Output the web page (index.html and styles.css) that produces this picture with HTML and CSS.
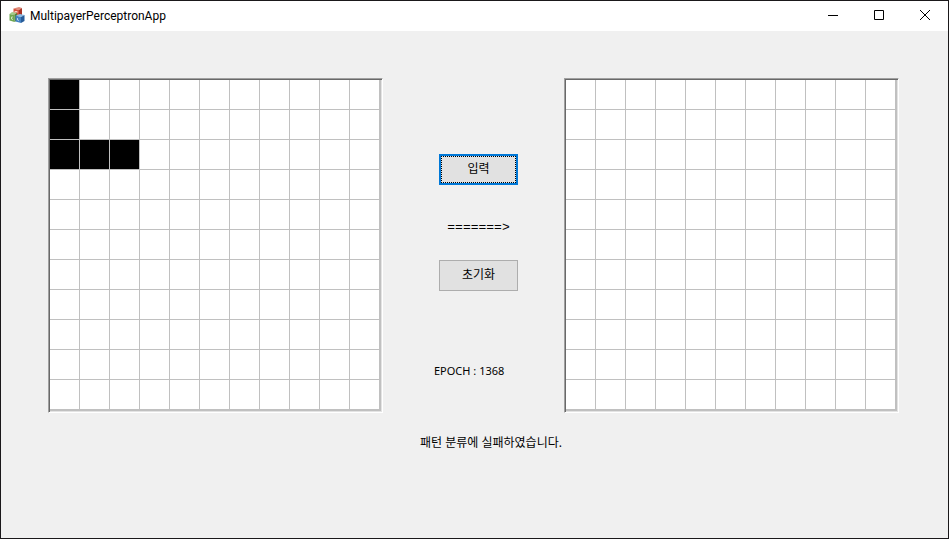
FILE: index.html
```html
<!DOCTYPE html>
<html lang="ko">
<head>
<meta charset="utf-8">
<title>MultipayerPerceptronApp</title>
<link rel="stylesheet" href="styles.css">
</head>
<body>
<div class="window">
  <header class="titlebar">
    <svg class="app-icon" viewBox="0 0 16 16" aria-hidden="true">
      <path fill="#e08a78" d="M4.500 1.500 10 0 13 1 10 3z"/>
      <path fill="#d4523c" d="M4.500 1.500 10 3v6L4.500 8z"/>
      <path fill="#a83224" d="M10 3l3-2v7L10 9z"/>
      <path fill="#a3cc8a" d="M0.500 7 3 5 8 6 5.500 8z"/>
      <path fill="#6fa850" d="M0.500 7 5.500 8v7L0.500 13.500z"/>
      <path fill="#47832f" d="M5.500 8 8 6v7.500l-2.500 1.500z"/>
      <path fill="#8dbbe3" d="M6.500 8.500 11 7l4.500 1L12 10z"/>
      <path fill="#4482c2" d="M6.500 8.500 12 10v6l-5.500-1.500z"/>
      <path fill="#275c9a" d="M12 10l3.500-2V14L12 16z"/>
      <path fill="none" stroke="#fff" stroke-opacity=".6" d="M6 6V4l1 1 1-1v2M4 10H2.500v2l1.500.5M8.500 11v2l1.500.5"/>
    </svg>
    <h1 class="title">MultipayerPerceptronApp</h1>
    <button class="caption" aria-label="Minimize"><svg viewBox="0 0 10 10"><path d="M0 5.500h10"/></svg></button>
    <button class="caption" aria-label="Maximize"><svg viewBox="0 0 10 10"><path d="M.5.5h9v9h-9z"/></svg></button>
    <button class="caption" aria-label="Close"><svg viewBox="0 0 10 10"><path d="M0 0l10 10M10 0L0 10"/></svg></button>
  </header>
  <main class="client">
    <div class="board" data-filled="0 11 22 23 24"></div>
    <section class="panel">
      <div class="controls">
        <button class="push default">입력</button>
        <span class="arrow">=======&gt;</span>
        <button class="push">초기화</button>
      </div>
      <p class="epoch">EPOCH : 1368</p>
      <p class="message">패턴 분류에 실패하였습니다.</p>
    </section>
    <div class="board" data-filled=""></div>
  </main>
</div>
<script src="board.js"></script>
</body>
</html>
```
FILE: styles.css
```css
* {
  box-sizing: border-box;
}

body {
  margin: 0;
  font: 12px/16px "Noto Sans", "Noto Sans CJK KR", sans-serif;
  color: #000;
}

.window {
  display: flex;
  flex-direction: column;
  min-height: 100vh;
  border: 1px solid #1a181a;
  background: #f0f0f0;
}

.titlebar {
  display: flex;
  align-items: center;
  height: 30px;
  background: #fff;
}

.app-icon {
  width: 16px;
  height: 16px;
  margin: 0 5px 2px 8px;
}

.title {
  flex: 1;
  margin: 0;
  font-family: Roboto, sans-serif;
  font-size: 12px;
  font-weight: 400;
}

.caption {
  display: flex;
  align-items: center;
  justify-content: center;
  width: 46px;
  height: 30px;
  padding: 0 0 2px;
  border: 0;
  background: none;
}

.caption svg {
  width: 10px;
  height: 10px;
  overflow: visible;
  fill: none;
  stroke: #000;
}

.client {
  display: grid;
  grid-template-columns: auto 1fr auto;
  align-items: start;
  padding: 47px 49px 0 47px;
}

.board {
  display: grid;
  grid-template-columns: repeat(11, 30px);
  grid-auto-rows: 30px;
  padding: 1px 2px 2px 1px;
  border: 1px solid;
  border-color: #a0a0a0 #fff #fff #a0a0a0;
  background: #c0c0c0;
  box-shadow: inset 1px 1px #696969, inset -1px -1px #e3e3e3;
}

.cell {
  border: solid #c0c0c0;
  border-width: 0 1px 1px 0;
  background: #fff;
}

.cell.filled {
  background: #000;
}

.panel {
  padding: 76px 0 0 37px;
}

.controls {
  display: flex;
  flex-direction: column;
  align-items: center;
  width: 117px;
}

.push {
  width: 79px;
  height: 31px;
  padding: 0 0 2px;
  border: 1px solid #adadad;
  background: #e1e1e1;
  color: #000;
  font: inherit;
}

.push.default {
  border: 2px solid #0078d7;
  outline: 1px dotted #000;
  outline-offset: -3px;
}

.arrow {
  margin: 35px 0 24px;
  font-family: "Liberation Mono", monospace;
  font-size: 13px;
}

.epoch {
  margin: 72px 0 0 14px;
  font-size: 11px;
}

.message {
  margin: 56px 0 0;
  white-space: nowrap;
}
```
FILE: board.js
```js
const CELLS = 11 * 11;

document.querySelectorAll(".board").forEach((board) => {
  const filled = new Set(board.dataset.filled.split(" "));
  for (let i = 0; i < CELLS; i++) {
    const cell = document.createElement("div");
    cell.className = filled.has(String(i)) ? "cell filled" : "cell";
    board.append(cell);
  }
});
```
